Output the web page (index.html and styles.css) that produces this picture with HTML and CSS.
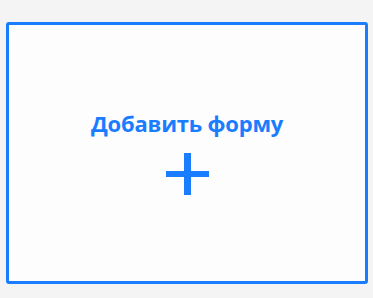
FILE: index.html
```html
<!DOCTYPE html>
<html lang="ru">
<head>
<meta charset="utf-8">
<link rel="stylesheet" href="styles.css">
</head>
<body>
<div class="page">
  <button class="add-card" type="button">
    <span class="add-title">Добавить форму</span>
    <span class="add-plus" aria-hidden="true"></span>
  </button>
</div>
</body>
</html>
```
FILE: styles.css
```css
html, body {
  margin: 0;
  padding: 0;
  background: #f4f4f4;
}
.page {
  width: 373px;
  height: 298px;
  box-sizing: border-box;
  padding: 22px 5px 14px 6px;
  display: flex;
}
.add-card {
  flex: 1;
  margin: 0;
  box-sizing: border-box;
  border: 3px solid #1a7cff;
  border-radius: 3px;
  background: #fdfdfd;
  display: flex;
  flex-direction: column;
  align-items: center;
  justify-content: center;
  gap: 17px;
  padding: 0 0 2px 0;
  cursor: pointer;
}
.add-title {
  font-family: "Open Sans", "Noto Sans", sans-serif;
  font-weight: 700;
  font-size: 22px;
  line-height: 26px;
  letter-spacing: -0.2px;
  color: #1a7cff;
}
.add-plus {
  position: relative;
  width: 43px;
  height: 42px;
}
.add-plus::before,
.add-plus::after {
  content: "";
  position: absolute;
  background: #1a7cff;
}
.add-plus::before {
  left: 0;
  right: 0;
  top: 18px;
  height: 6px;
}
.add-plus::after {
  top: 0;
  bottom: 0;
  left: 18px;
  width: 7px;
}
```
